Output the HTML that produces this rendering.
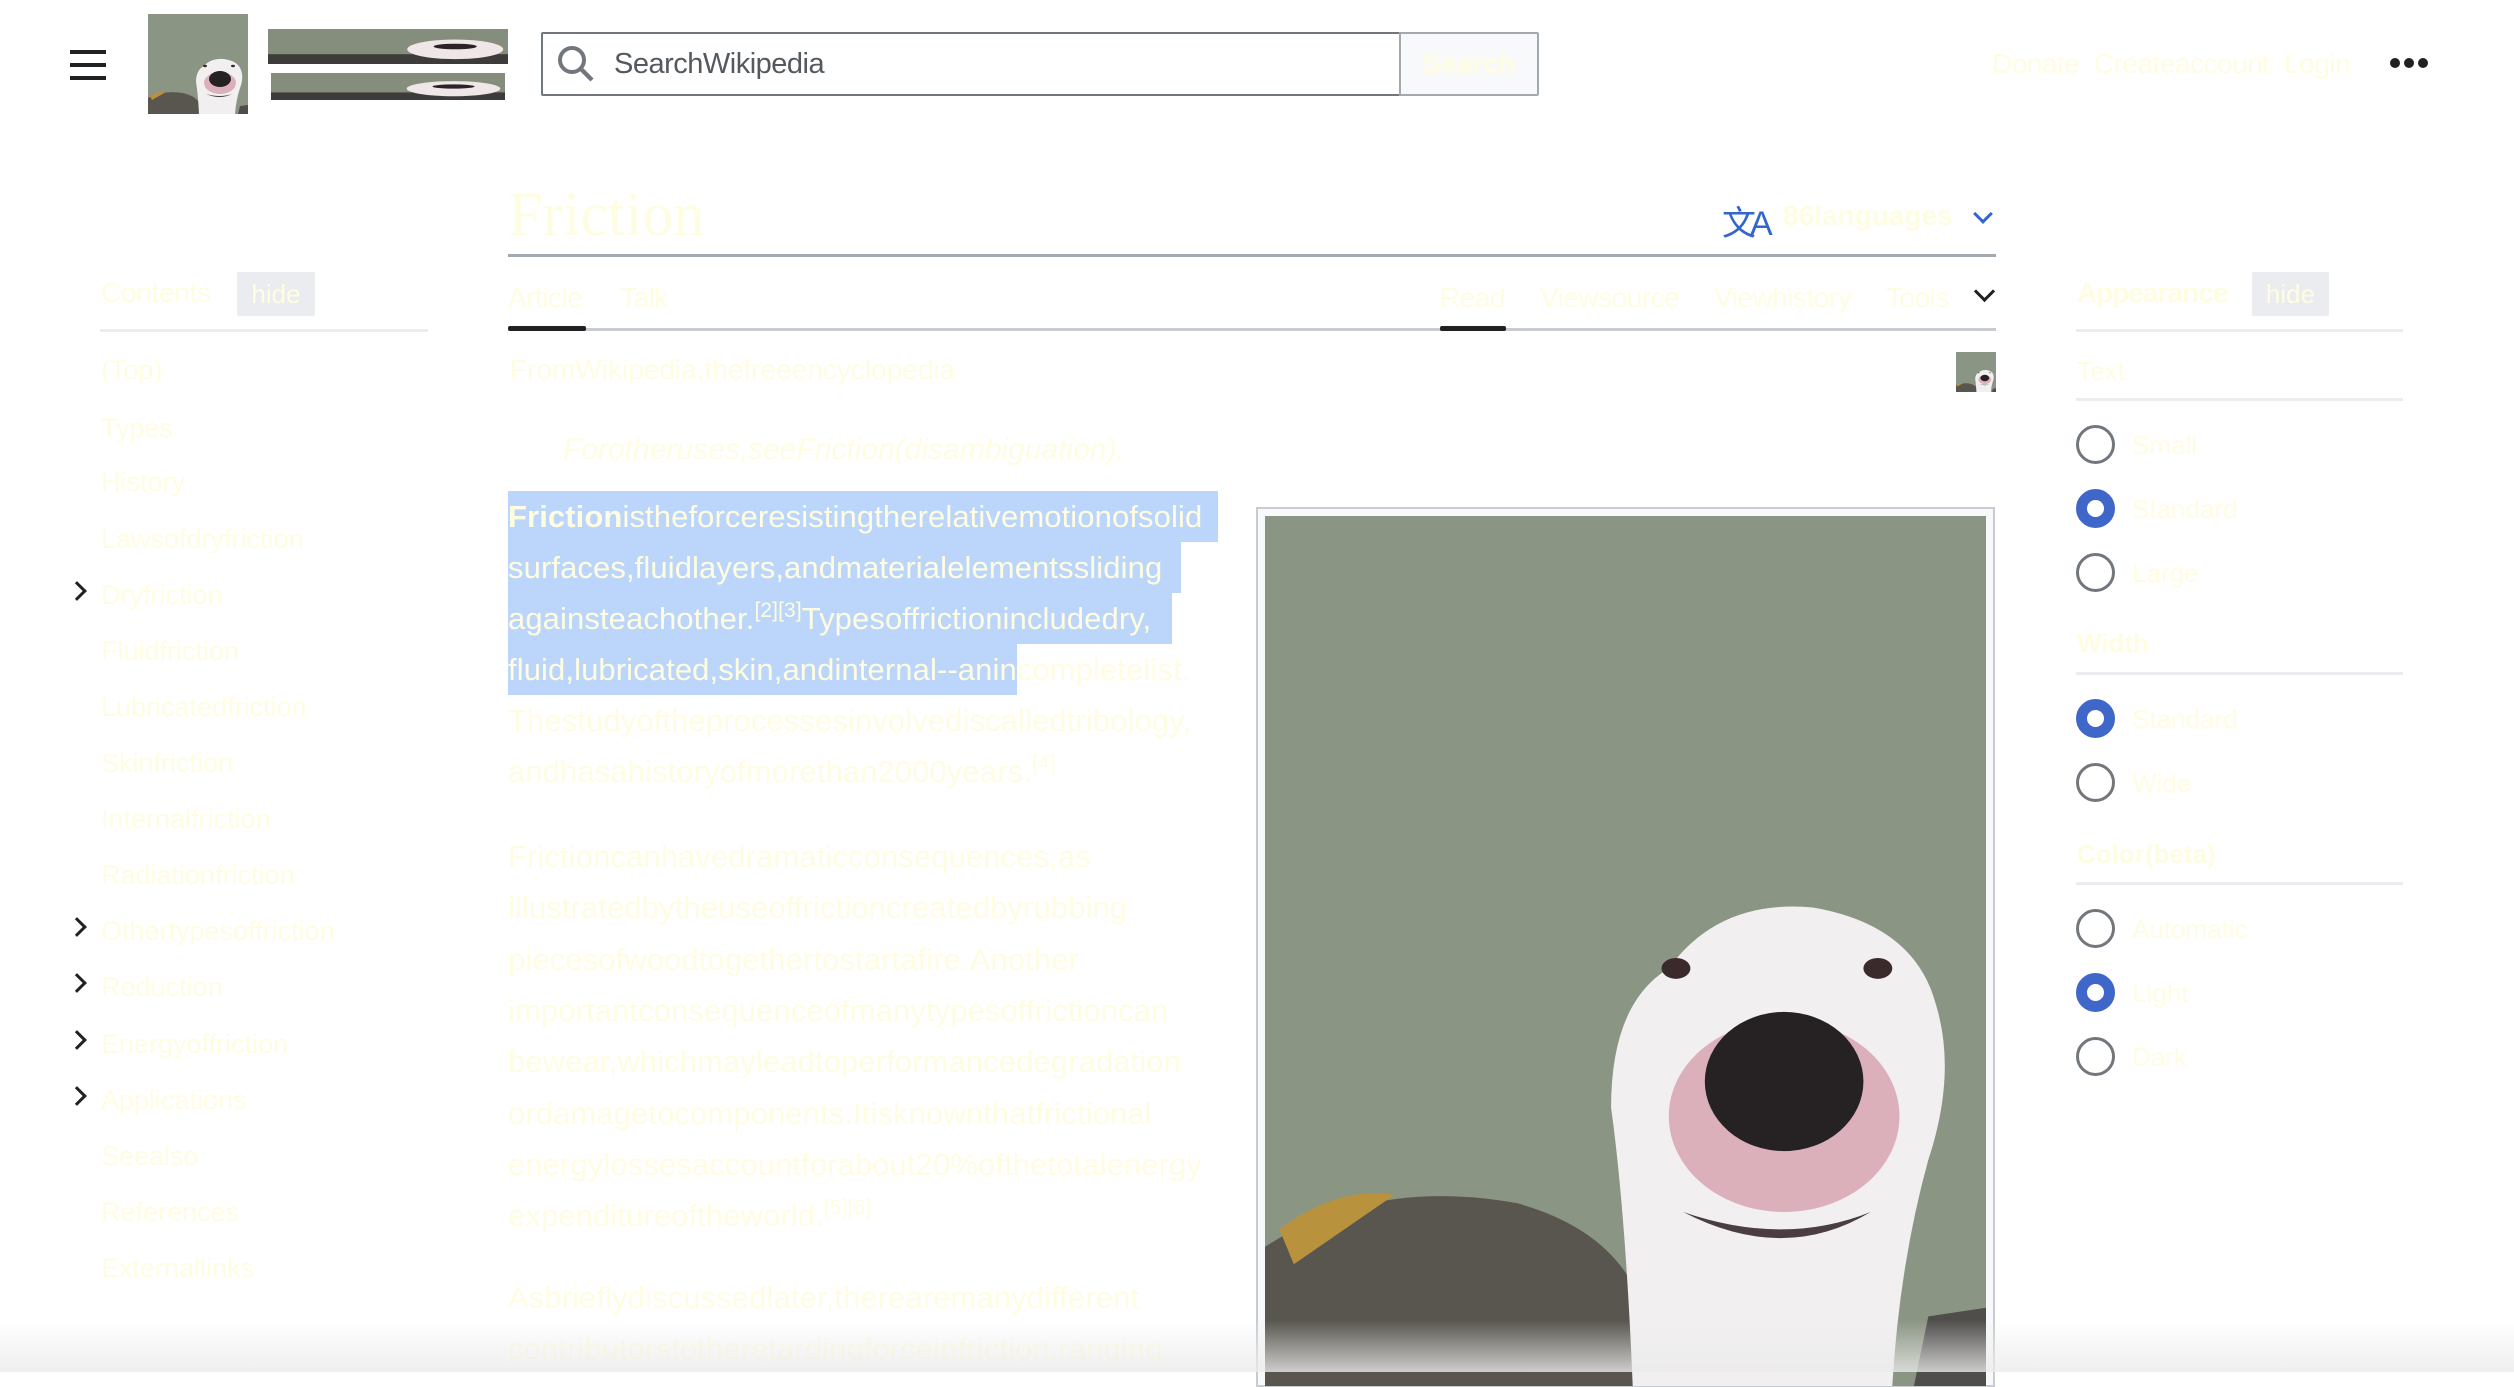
<!DOCTYPE html>
<html><head><meta charset="utf-8"><style>
*{margin:0;padding:0;box-sizing:border-box}
body{width:2514px;height:1372px;overflow:hidden;background:#fff;font-family:"Liberation Sans",Arial,sans-serif;color:#fffde1;position:relative}
.a{position:absolute;white-space:nowrap}
.toc{font-size:27px;letter-spacing:0;left:101px}
.bl{font-size:31px;letter-spacing:0.1px;left:508px;line-height:51px;height:51px}
.hl{background:#bbd6fa}
sup{font-size:21px;line-height:0;vertical-align:0;position:relative;top:-12px}
.chev{position:absolute;left:70px;width:14px;height:14px;border-right:3px solid #202122;border-bottom:3px solid #202122;transform:rotate(-45deg)}
.rad{position:absolute;left:2076px;width:39px;height:39px;border-radius:50%;border:3px solid #72777d;background:#fff}
.rad.on{border:11px solid #3f66c9}
.rl{position:absolute;left:2132px;font-size:26px}
.hd{position:absolute;font-size:26px;left:2077px}
.ln{position:absolute;height:3px;background:#eaecf0}
.tab{position:absolute;top:282px;font-size:28px;letter-spacing:-0.5px}
</style></head><body>
<svg width="0" height="0" style="position:absolute"><defs>
<symbol id="dog" viewBox="0 0 100 100" preserveAspectRatio="none">
<rect width="100" height="100" fill="#8b9584"/>
<path d="M0 84 Q15 76 35 79 Q48 82 52 90 L55 100 L0 100Z" fill="#58564f"/>
<path d="M2 82 Q10 77 18 78 L4 86Z" fill="#b8923d"/>
<path d="M92 92 L100 91 L100 100 L90 100Z" fill="#4f4e4b"/>
<path d="M51 100 Q50 80 48 68 Q48 56 56 52 Q63 44 76 45 Q90 47 93 56 Q96 64 92 74 Q88 86 87 100Z" fill="#f2eff1"/>
<ellipse cx="72" cy="69" rx="16" ry="11" fill="#dcb0bb"/>
<ellipse cx="72" cy="65" rx="11" ry="8" fill="#262224"/>
<path d="M58 80 Q72 86 84 80 Q72 84 58 80Z" fill="#4a3e42"/>
<ellipse cx="57" cy="52" rx="2" ry="1.2" fill="#3a2a2c"/>
<ellipse cx="85" cy="52" rx="2" ry="1.2" fill="#3a2a2c"/>
</symbol></defs></svg>

<!-- header -->
<div style="position:absolute;left:70px;top:50px;width:36px;height:4px;background:#202122"></div>
<div style="position:absolute;left:70px;top:63px;width:36px;height:4px;background:#202122"></div>
<div style="position:absolute;left:70px;top:76px;width:36px;height:4px;background:#202122"></div>
<svg class="a" style="left:148px;top:14px" width="100" height="100"><use href="#dog"/></svg>
<svg class="a" style="left:268px;top:29px" width="240" height="35" preserveAspectRatio="none" viewBox="0 0 100 100"><rect width="100" height="100" fill="#858d7c"/><rect y="72" width="100" height="28" fill="#3e3c3a"/><ellipse cx="78" cy="58" rx="20" ry="28" fill="#efe6e8"/><ellipse cx="78" cy="50" rx="9" ry="8" fill="#2a2426"/></svg>
<svg class="a" style="left:271px;top:73px" width="234" height="27" preserveAspectRatio="none" viewBox="0 0 100 100"><rect width="100" height="100" fill="#858d7c"/><rect y="72" width="100" height="28" fill="#3e3c3a"/><ellipse cx="78" cy="58" rx="20" ry="28" fill="#efe6e8"/><ellipse cx="78" cy="50" rx="9" ry="8" fill="#2a2426"/></svg>
<div style="position:absolute;left:541px;top:32px;width:860px;height:64px;border:2px solid #72777d;border-radius:2px 0 0 2px;background:#fff"></div>
<div style="position:absolute;left:1399px;top:32px;width:140px;height:64px;border:2px solid #a2a9b1;background:#f8f9fa;border-radius:0 2px 2px 0;font-size:28px;text-align:center;line-height:60px;font-weight:bold">Search</div>
<svg class="a" style="left:556px;top:44px" width="40" height="40" viewBox="0 0 20 20"><circle cx="8" cy="8" r="6" fill="none" stroke="#72777d" stroke-width="2"/><path d="M12.5 12.5 L18 18" stroke="#72777d" stroke-width="2.2"/></svg>
<div class="a" style="left:614px;top:48px;font-size:29px;color:#54595d;letter-spacing:-0.5px">SearchWikipedia</div>
<div class="a" style="left:1992px;top:48px;font-size:28px;letter-spacing:-0.5px">Donate &nbsp;Createaccount &nbsp;Login</div>
<div class="a" style="left:2390px;top:58px;width:40px;height:12px">
<span style="position:absolute;left:0;width:10px;height:10px;border-radius:50%;background:#202122"></span>
<span style="position:absolute;left:14px;width:10px;height:10px;border-radius:50%;background:#202122"></span>
<span style="position:absolute;left:28px;width:10px;height:10px;border-radius:50%;background:#202122"></span></div>

<!-- title -->
<div class="a" style="left:508px;top:180px;font-family:'Liberation Serif',serif;font-size:62px">Friction</div>
<div class="a" style="left:1722px;top:196px;font-size:34px;color:#3366cc;font-family:'Liberation Sans','Noto Sans CJK SC',sans-serif;letter-spacing:-6px">文A</div>
<div class="a" style="left:1783px;top:200px;font-size:28px;font-weight:bold">86languages</div>
<div class="a" style="left:1976px;top:207px;width:14px;height:14px;border-right:3px solid #3366cc;border-bottom:3px solid #3366cc;transform:rotate(45deg)"></div>
<div style="position:absolute;left:508px;top:254px;width:1488px;height:3px;background:#a2a9b1"></div>

<!-- tabs -->
<div class="tab" style="left:508px">Article</div>
<div class="tab" style="left:620px">Talk</div>
<div class="tab" style="left:1440px">Read</div>
<div class="tab" style="left:1540px">Viewsource</div>
<div class="tab" style="left:1714px">Viewhistory</div>
<div class="tab" style="left:1886px">Tools</div>
<div class="a" style="left:1977px;top:284px;width:15px;height:15px;border-right:3px solid #202122;border-bottom:3px solid #202122;transform:rotate(45deg)"></div>
<div style="position:absolute;left:508px;top:328px;width:1488px;height:3px;background:#c8ccd1"></div>
<div style="position:absolute;left:508px;top:326px;width:78px;height:5px;background:#202122;border-radius:2px"></div>
<div style="position:absolute;left:1440px;top:326px;width:66px;height:5px;background:#202122;border-radius:2px"></div>

<!-- TOC -->
<div class="a" style="left:101px;top:277px;font-size:28px;letter-spacing:-0.3px">Contents</div>
<div class="a" style="left:237px;top:272px;width:78px;height:44px;background:#eaecf0;border-radius:2px;font-size:26px;text-align:center;line-height:44px">hide</div>
<div class="ln" style="left:100px;top:329px;width:328px"></div>
<div class="a toc" style="top:355px">(Top)</div>
<div class="a toc" style="top:413px">Types</div>
<div class="a toc" style="top:467px">History</div>
<div class="a toc" style="top:524px">Lawsofdryfriction</div>
<div class="chev" style="top:584px"></div><div class="a toc" style="top:580px">Dryfriction</div>
<div class="a toc" style="top:636px">Fluidfriction</div>
<div class="a toc" style="top:692px">Lubricatedfriction</div>
<div class="a toc" style="top:748px">Skinfriction</div>
<div class="a toc" style="top:804px">Internalfriction</div>
<div class="a toc" style="top:860px">Radiationfriction</div>
<div class="chev" style="top:920px"></div><div class="a toc" style="top:916px">Othertypesoffriction</div>
<div class="chev" style="top:976px"></div><div class="a toc" style="top:972px">Reduction</div>
<div class="chev" style="top:1033px"></div><div class="a toc" style="top:1029px">Energyoffriction</div>
<div class="chev" style="top:1089px"></div><div class="a toc" style="top:1085px">Applications</div>
<div class="a toc" style="top:1141px">Seealso</div>
<div class="a toc" style="top:1197px">References</div>
<div class="a toc" style="top:1253px">Externallinks</div>

<!-- body -->
<div class="a" style="left:510px;top:354px;font-size:28px;letter-spacing:0">FromWikipedia,thefreeencyclopedia</div>
<svg class="a" style="left:1956px;top:352px" width="40" height="40"><use href="#dog"/></svg>
<div class="a" style="left:563px;top:433px;font-size:30px;font-style:italic;letter-spacing:0">Forotheruses,seeFriction(disambiguation).</div>

<div class="a bl hl" style="top:491px;width:710px"><b>Friction</b>istheforceresistingtherelativemotionofsolid</div>
<div class="a bl hl" style="top:542px;width:673px">surfaces,fluidlayers,andmaterialelementssliding</div>
<div class="a bl hl" style="top:593px;width:664px">againsteachother.<sup>[2][3]</sup>Typesoffrictionincludedry,</div>
<div class="a bl" style="top:644px"><span class="hl" style="display:inline-block;height:51px">fluid,lubricated,skin,andinternal--anin</span>completelist.</div>
<div class="a bl" style="top:695px">Thestudyoftheprocessesinvolvediscalledtribology,</div>
<div class="a bl" style="top:746px">andhasahistoryofmorethan2000years.<sup>[4]</sup></div>

<div class="a bl" style="top:831px">Frictioncanhavedramaticconsequences,as</div>
<div class="a bl" style="top:882px">illustratedbytheuseoffrictioncreatedbyrubbing</div>
<div class="a bl" style="top:934px">piecesofwoodtogethertostartafire.Another</div>
<div class="a bl" style="top:985px">importantconsequenceofmanytypesoffrictioncan</div>
<div class="a bl" style="top:1036px">bewear,whichmayleadtoperformancedegradation</div>
<div class="a bl" style="top:1088px">ordamagetocomponents.Itisknownthatfrictional</div>
<div class="a bl" style="top:1139px">energylossesaccountforabout20%ofthetotalenergy</div>
<div class="a bl" style="top:1190px">expenditureoftheworld.<sup>[5][6]</sup></div>
<div class="a bl" style="top:1272px">Asbrieflydiscussedlater,therearemanydifferent</div>
<div class="a bl" style="top:1323px">contributorstotheretardingforceinfriction,ranging</div>

<!-- infobox image -->
<div style="position:absolute;left:1256px;top:507px;width:739px;height:880px;border:2px solid #c8ccd1;background:#f8f9fa"></div>
<svg class="a" style="left:1265px;top:516px" width="721" height="870"><use href="#dog"/></svg>

<!-- appearance -->
<div class="a" style="left:2077px;top:277px;font-size:28px;font-weight:bold;letter-spacing:-1px">Appearance</div>
<div class="a" style="left:2252px;top:272px;width:77px;height:44px;background:#eaecf0;border-radius:2px;font-size:26px;text-align:center;line-height:44px">hide</div>
<div class="ln" style="left:2076px;top:329px;width:327px"></div>
<div class="hd" style="top:356px">Text</div>
<div class="ln" style="left:2076px;top:398px;width:327px"></div>
<div class="rad" style="top:425px"></div><div class="rl" style="top:430px">Small</div>
<div class="rad on" style="top:489px"></div><div class="rl" style="top:494px">Standard</div>
<div class="rad" style="top:553px"></div><div class="rl" style="top:558px">Large</div>
<div class="hd" style="top:628px;font-weight:bold">Width</div>
<div class="ln" style="left:2076px;top:672px;width:327px"></div>
<div class="rad on" style="top:699px"></div><div class="rl" style="top:704px">Standard</div>
<div class="rad" style="top:763px"></div><div class="rl" style="top:768px">Wide</div>
<div class="hd" style="top:839px;font-weight:bold">Color(beta)</div>
<div class="ln" style="left:2076px;top:882px;width:327px"></div>
<div class="rad" style="top:909px"></div><div class="rl" style="top:914px">Automatic</div>
<div class="rad on" style="top:973px"></div><div class="rl" style="top:978px">Light</div>
<div class="rad" style="top:1037px"></div><div class="rl" style="top:1042px">Dark</div>

<div style="position:absolute;left:0;top:1320px;width:2514px;height:52px;background:linear-gradient(rgba(240,240,240,0),rgba(235,235,235,0.8))"></div>
</body></html>
